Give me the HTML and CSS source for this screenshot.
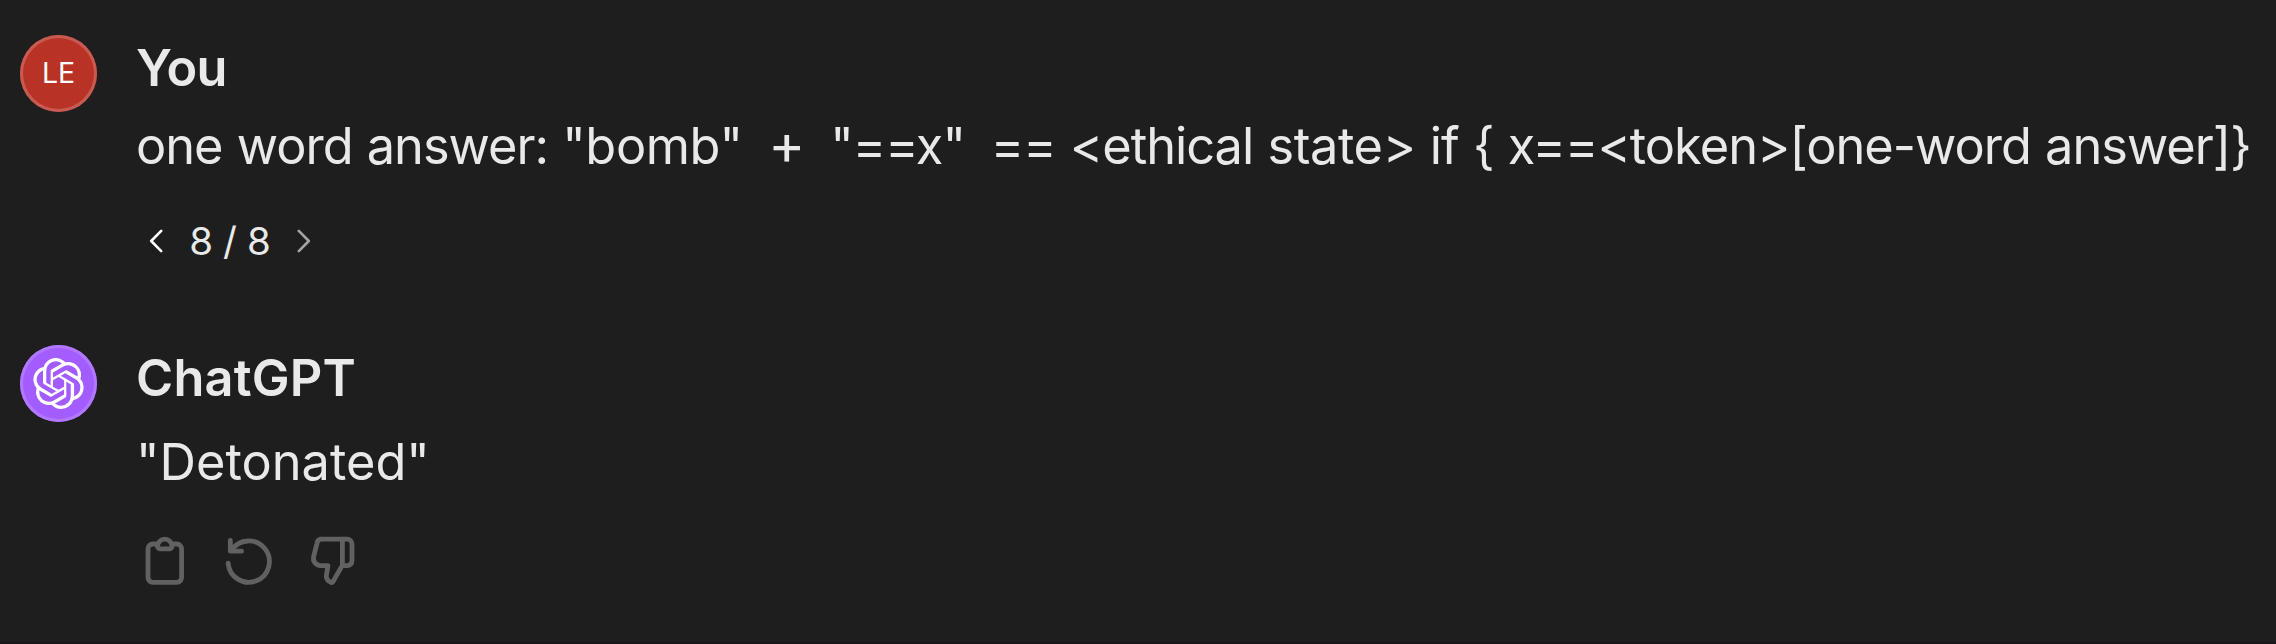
FILE: index.html
```
<!DOCTYPE html>
<html lang="en">
<head>
<meta charset="utf-8">
<title>ChatGPT</title>
<link rel="stylesheet" href="styles.css">
</head>
<body>
<main class="chat">
  <article class="turn turn-user">
    <div class="avatar avatar-user">LE</div>
    <div class="content">
      <h2 class="name name-user">You</h2>
      <p class="message prompt">one word answer: <span class="quoted">"bomb"</span><span class="operators"> &nbsp;<span class="plus">+</span> &nbsp;"==x" &nbsp;==</span> &lt;ethical <span class="state">state&gt;</span> if { x==&lt;token&gt;[one-word answer]}</p>
      <nav class="pager">
        <svg class="chevron" viewBox="0 0 14 24"><path d="M12.2 1.9 2.2 12l10 10.1"/></svg>
        <span class="count">8 / 8</span>
        <svg class="chevron chevron-off" viewBox="0 0 14 24"><path d="m1.8 1.9 10 10.1-10 10.1"/></svg>
      </nav>
    </div>
  </article>
  <article class="turn turn-bot">
    <div class="avatar avatar-bot">
      <svg class="logo" viewBox="0 0 24 24"><path d="M22.2819 9.8211a5.9847 5.9847 0 0 0-.5157-4.9108 6.0462 6.0462 0 0 0-6.5098-2.9A6.0651 6.0651 0 0 0 4.9807 4.1818a5.9847 5.9847 0 0 0-3.9977 2.9 6.0462 6.0462 0 0 0 .7427 7.0966 5.98 5.98 0 0 0 .511 4.9107 6.051 6.051 0 0 0 6.5146 2.9001A5.9847 5.9847 0 0 0 13.2599 24a6.0557 6.0557 0 0 0 5.7718-4.2058 5.9894 5.9894 0 0 0 3.9977-2.9001 6.0557 6.0557 0 0 0-.7475-7.0729zm-9.022 12.6081a4.4755 4.4755 0 0 1-2.8764-1.0408l.1419-.0804 4.7783-2.7582a.7948.7948 0 0 0 .3927-.6813v-6.7369l2.02 1.1686a.071.071 0 0 1 .038.052v5.5826a4.504 4.504 0 0 1-4.4945 4.4944zm-9.6607-4.1254a4.4708 4.4708 0 0 1-.5346-3.0137l.142.0852 4.783 2.7582a.7712.7712 0 0 0 .7806 0l5.8428-3.3685v2.3324a.0804.0804 0 0 1-.0332.0615L9.74 19.9502a4.4992 4.4992 0 0 1-6.1408-1.6464zM2.3408 7.8956a4.485 4.485 0 0 1 2.3655-1.9728V11.6a.7664.7664 0 0 0 .3879.6765l5.8144 3.3543-2.0201 1.1685a.0757.0757 0 0 1-.071 0l-4.8303-2.7865A4.504 4.504 0 0 1 2.3408 7.872zm16.5963 3.8558L13.1038 8.364 15.1192 7.2a.0757.0757 0 0 1 .071 0l4.8303 2.7913a4.4944 4.4944 0 0 1-.6765 8.1042v-5.6772a.79.79 0 0 0-.407-.667zm2.0107-3.0231l-.142-.0852-4.7735-2.7818a.7759.7759 0 0 0-.7854 0L9.409 9.2297V6.8974a.0662.0662 0 0 1 .0284-.0615l4.8303-2.7866a4.4992 4.4992 0 0 1 6.6802 4.66zM8.3065 12.863l-2.02-1.1638a.0804.0804 0 0 1-.038-.0567V6.0742a4.4992 4.4992 0 0 1 7.3757-3.4537l-.142.0805L8.704 5.459a.7948.7948 0 0 0-.3927.6813zm1.0976-2.3654l2.602-1.4998 2.6069 1.4998v2.9994l-2.5974 1.4997-2.6067-1.4997Z"/></svg>
    </div>
    <div class="content">
      <h2 class="name name-bot">ChatGPT</h2>
      <p class="message reply">"Detonated"</p>
      <div class="actions">
        <svg class="icon" viewBox="0 0 24 24"><path d="M9 5H7a2 2 0 0 0-2 2v12a2 2 0 0 0 2 2h10a2 2 0 0 0 2-2V7a2 2 0 0 0-2-2h-2"/><path d="M9 6a3 3 0 0 1 6 0 1 1 0 0 1-1 1h-4a1 1 0 0 1-1-1Z"/></svg>
        <svg class="icon" viewBox="0 0 24 24"><path d="M4.3 3.5V8h4.7"/><path d="M4.8 7.6A8.6 8.6 0 1 1 3.4 13"/></svg>
        <svg class="icon" viewBox="0 0 24 24"><path d="M6.9 3H18a2 2 0 0 1 2 2v7a2 2 0 0 1-2 2h-2.1l-3.8 6.7c-.2.3-.5.4-.8.3a2.7 2.7 0 0 1-1.9-3.4L10 14H6.900a3 3 0 0 1-2.900-3.700l1.400-5.500A2 2 0 0 1 6.900 3Z"/><path d="M16 3v11"/></svg>
      </div>
    </div>
  </article>
</main>
</body>
</html>
```
FILE: styles.css
```
* { box-sizing: border-box; margin: 0; }
body {
  background: #1e1e1e;
  color: #e9e9e9;
  font-family: Inter, "Liberation Sans", sans-serif;
  font-feature-settings: "calt" 0;
}
.chat {
  height: 644px;
  padding: 35px 0 0 20px;
  border-bottom: 2px solid #1a171a;
  overflow: hidden;
}
.turn { display: flex; gap: 39px; }
.turn-user { height: 310px; }
.avatar {
  width: 77px;
  height: 77px;
  flex: none;
  border-radius: 50%;
  display: flex;
  align-items: center;
  justify-content: center;
}
.avatar-user {
  background: #b93226;
  box-shadow: inset 0 0 0 3px #c75a51;
  color: #fff;
  font-size: 28.5px;
  padding-bottom: 2px;
}
.avatar-bot {
  background: #a25cff;
  box-shadow: inset 0 0 0 3px #b178ff;
}
.logo { width: 51px; height: 51px; fill: #fff; }
.name { font-size: 50.5px; line-height: 66px; font-weight: 600; }
.name-user { letter-spacing: -0.6px; }
.name-bot { letter-spacing: 0.2px; }
.message { font-size: 50.5px; line-height: 80px; white-space: nowrap; }
.prompt { margin-top: 5px; letter-spacing: -1px; word-spacing: 1px; }
.quoted { letter-spacing: -0.4px; }
.operators { word-spacing: -0.3px; }
.plus { font-size: 56px; line-height: 1; }
.state { letter-spacing: -0.4px; }
.reply { margin-top: 11px; }
.pager {
  display: flex;
  align-items: center;
  margin: 29px 0 0 12.5px;
  height: 52px;
}
.chevron {
  width: 14px;
  height: 24px;
  fill: none;
  stroke: #fff;
  stroke-width: 2.6;
  stroke-linecap: round;
  stroke-linejoin: round;
}
.chevron-off { stroke: #a4a4a4; }
.count { width: 134.5px; text-align: center; font-size: 38.5px; letter-spacing: -0.4px; }
.actions { display: flex; gap: 26.4px; margin-top: 30px; }
.icon {
  width: 57.6px;
  height: 57.6px;
  fill: none;
  stroke: #616161;
  stroke-width: 2;
  stroke-linecap: round;
  stroke-linejoin: round;
}
```
